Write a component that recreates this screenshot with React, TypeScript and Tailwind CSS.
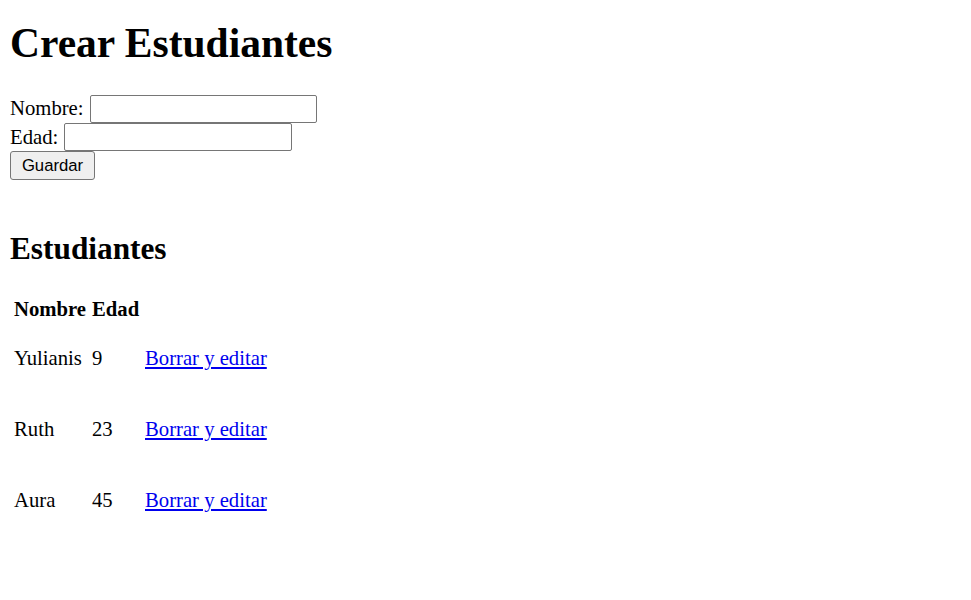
const estudiantes = [
  { nombre: 'Yulianis', edad: 9 },
  { nombre: 'Ruth', edad: 23 },
  { nombre: 'Aura', edad: 45 },
];

export default function App() {
  return (
    <div className="min-h-[600px] bg-white px-[10px] pt-[20px] font-['Liberation_Serif',serif] text-[20.7px] leading-[23px] text-black">
      <h1 className="text-[41.5px] font-bold leading-[46px]">Crear Estudiantes</h1>

      <form className="mt-[28px] flex flex-col" onSubmit={(e) => e.preventDefault()}>
        <div className="flex h-[29px] items-center gap-[6px]">
          <label>Nombre:</label>
          <input type="text" className="h-[28px] w-[227px] rounded-[2px] border border-[#767676] bg-white px-[2px]" />
        </div>
        <div className="flex h-[28px] items-center gap-[6px]">
          <label>Edad:</label>
          <input type="text" className="h-[28px] w-[228px] rounded-[2px] border border-[#767676] bg-white px-[2px]" />
        </div>
        <div>
          <button
            type="submit"
            className="h-[29px] w-[85px] rounded-[3px] border border-[#767676] bg-[#efefef] font-['Liberation_Sans',Arial,sans-serif] text-[16.7px] leading-[20px] text-black"
          >
            Guardar
          </button>
        </div>
      </form>

      <h2 className="mt-[52px] text-[31.3px] font-bold leading-[34px]">Estudiantes</h2>

      <table className="mt-[32px] ml-[4px] border-separate border-spacing-0">
        <thead>
          <tr className="h-[25px]">
            <th className="w-[78px] p-0 text-left align-top font-bold">Nombre</th>
            <th className="w-[53px] p-0 text-left align-top font-bold">Edad</th>
            <th className="p-0"></th>
          </tr>
        </thead>
        <tbody>
          {estudiantes.map((e) => (
            <tr key={e.nombre} className="h-[71px]">
              <td className="p-0 align-middle">{e.nombre}</td>
              <td className="p-0 align-middle">{e.edad}</td>
              <td className="p-0 align-middle">
                <a href="#" className="text-[#0000ee] underline">
                  Borrar y editar
                </a>
              </td>
            </tr>
          ))}
        </tbody>
      </table>
    </div>
  );
}
